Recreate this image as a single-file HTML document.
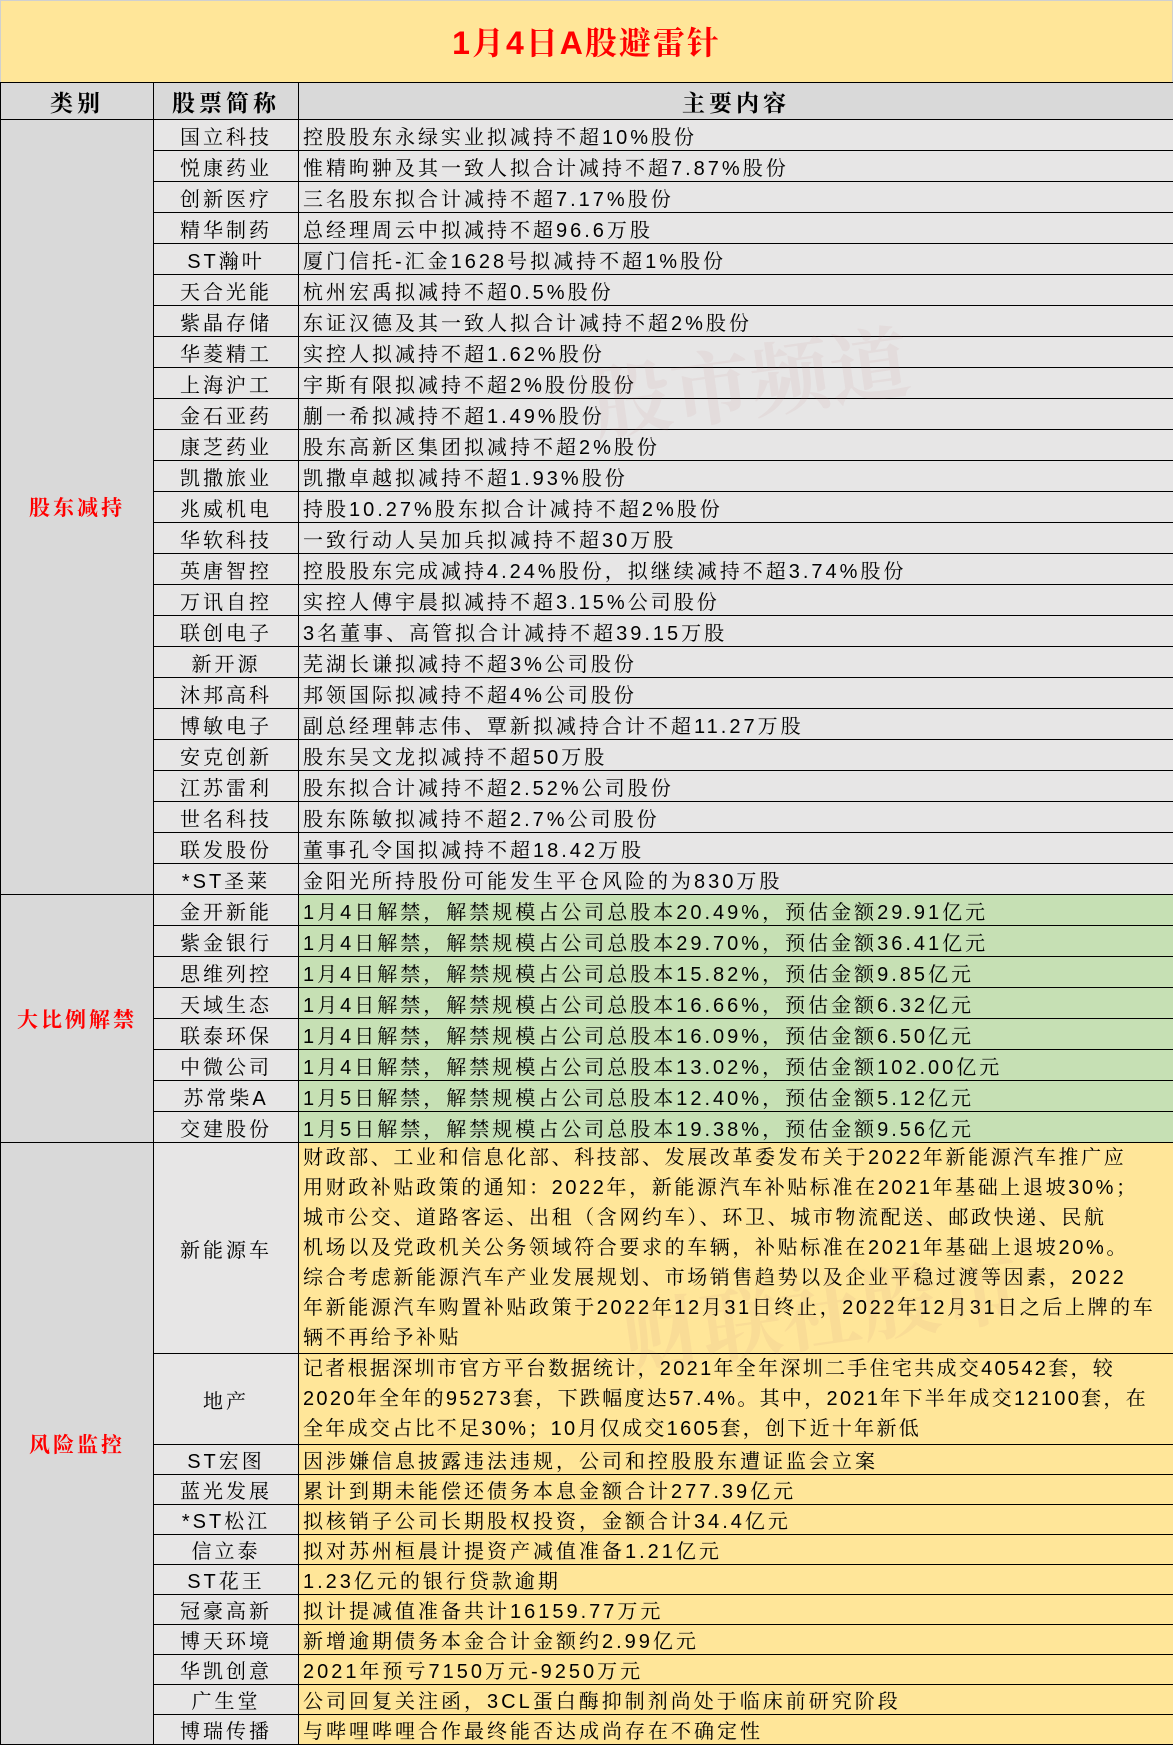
<!DOCTYPE html>
<html><head><meta charset="utf-8"><style>
body{margin:0;background:#fff;width:1173px;height:1743px;overflow:hidden;position:relative;font-family:"Liberation Sans","Noto Serif CJK SC",serif;}
.title{position:absolute;left:0;top:0;width:1171px;height:82px;background:#ffe699;border:1px solid #d0d0d0;border-bottom:none;text-align:center;line-height:84px;color:#ff0000;font-size:32px;font-weight:bold;letter-spacing:2px;}
table{position:absolute;left:0;top:82px;border-collapse:collapse;table-layout:fixed;width:1173px;}
td{border:1.5px solid #000;padding:0;font-size:20px;letter-spacing:3px;white-space:nowrap;overflow:hidden;color:#000;}
tr.h{height:37px;}
tr.r{height:31px;}
tr.s{height:30px;}
tr.b1{height:210px;}
tr.b2{height:90px;}
th{border:1.5px solid #000;background:#d9d9d9;font-size:23px;font-weight:bold;letter-spacing:4px;padding:0;}
.cat{background:#d9d9d9;text-align:center;color:#ff0000;font-weight:bold;font-size:21px;letter-spacing:3px;}
.n{background:#e7e6e6;text-align:center;}
.c{background:#e7e6e6;padding-left:4px;}
.g{background:#c6e0b4;padding-left:4px;}
.y{background:#ffe699;padding-left:4px;}
.m{line-height:30px;letter-spacing:2.6px;}
.wm{position:absolute;font-weight:bold;color:rgba(190,120,120,0.09);pointer-events:none;white-space:nowrap;}
</style></head><body>
<div class="title">1月4日A股避雷针</div>
<table>
<colgroup><col style="width:153px"><col style="width:145px"><col style="width:875px"></colgroup>
<tr class="h"><th>类别</th><th>股票简称</th><th>主要内容</th></tr>
<tr class="r"><td class="cat" rowspan="25">股东减持</td><td class="n">国立科技</td><td class="c">控股股东永绿实业拟减持不超10%股份</td></tr>
<tr class="r"><td class="n">悦康药业</td><td class="c">惟精昫翀及其一致人拟合计减持不超7.87%股份</td></tr>
<tr class="r"><td class="n">创新医疗</td><td class="c">三名股东拟合计减持不超7.17%股份</td></tr>
<tr class="r"><td class="n">精华制药</td><td class="c">总经理周云中拟减持不超96.6万股</td></tr>
<tr class="r"><td class="n">ST瀚叶</td><td class="c">厦门信托-汇金1628号拟减持不超1%股份</td></tr>
<tr class="r"><td class="n">天合光能</td><td class="c">杭州宏禹拟减持不超0.5%股份</td></tr>
<tr class="r"><td class="n">紫晶存储</td><td class="c">东证汉德及其一致人拟合计减持不超2%股份</td></tr>
<tr class="r"><td class="n">华菱精工</td><td class="c">实控人拟减持不超1.62%股份</td></tr>
<tr class="r"><td class="n">上海沪工</td><td class="c">宇斯有限拟减持不超2%股份股份</td></tr>
<tr class="r"><td class="n">金石亚药</td><td class="c">蒯一希拟减持不超1.49%股份</td></tr>
<tr class="r"><td class="n">康芝药业</td><td class="c">股东高新区集团拟减持不超2%股份</td></tr>
<tr class="r"><td class="n">凯撒旅业</td><td class="c">凯撒卓越拟减持不超1.93%股份</td></tr>
<tr class="r"><td class="n">兆威机电</td><td class="c">持股10.27%股东拟合计减持不超2%股份</td></tr>
<tr class="r"><td class="n">华软科技</td><td class="c">一致行动人吴加兵拟减持不超30万股</td></tr>
<tr class="r"><td class="n">英唐智控</td><td class="c">控股股东完成减持4.24%股份，拟继续减持不超3.74%股份</td></tr>
<tr class="r"><td class="n">万讯自控</td><td class="c">实控人傅宇晨拟减持不超3.15%公司股份</td></tr>
<tr class="r"><td class="n">联创电子</td><td class="c">3名董事、高管拟合计减持不超39.15万股</td></tr>
<tr class="r"><td class="n">新开源</td><td class="c">芜湖长谦拟减持不超3%公司股份</td></tr>
<tr class="r"><td class="n">沐邦高科</td><td class="c">邦领国际拟减持不超4%公司股份</td></tr>
<tr class="r"><td class="n">博敏电子</td><td class="c">副总经理韩志伟、覃新拟减持合计不超11.27万股</td></tr>
<tr class="r"><td class="n">安克创新</td><td class="c">股东吴文龙拟减持不超50万股</td></tr>
<tr class="r"><td class="n">江苏雷利</td><td class="c">股东拟合计减持不超2.52%公司股份</td></tr>
<tr class="r"><td class="n">世名科技</td><td class="c">股东陈敏拟减持不超2.7%公司股份</td></tr>
<tr class="r"><td class="n">联发股份</td><td class="c">董事孔令国拟减持不超18.42万股</td></tr>
<tr class="r"><td class="n">*ST圣莱</td><td class="c">金阳光所持股份可能发生平仓风险的为830万股</td></tr>
<tr class="r"><td class="cat" rowspan="8">大比例解禁</td><td class="n">金开新能</td><td class="g">1月4日解禁，解禁规模占公司总股本20.49%，预估金额29.91亿元</td></tr>
<tr class="r"><td class="n">紫金银行</td><td class="g">1月4日解禁，解禁规模占公司总股本29.70%，预估金额36.41亿元</td></tr>
<tr class="r"><td class="n">思维列控</td><td class="g">1月4日解禁，解禁规模占公司总股本15.82%，预估金额9.85亿元</td></tr>
<tr class="r"><td class="n">天域生态</td><td class="g">1月4日解禁，解禁规模占公司总股本16.66%，预估金额6.32亿元</td></tr>
<tr class="r"><td class="n">联泰环保</td><td class="g">1月4日解禁，解禁规模占公司总股本16.09%，预估金额6.50亿元</td></tr>
<tr class="r"><td class="n">中微公司</td><td class="g">1月4日解禁，解禁规模占公司总股本13.02%，预估金额102.00亿元</td></tr>
<tr class="r"><td class="n">苏常柴A</td><td class="g">1月5日解禁，解禁规模占公司总股本12.40%，预估金额5.12亿元</td></tr>
<tr class="r"><td class="n">交建股份</td><td class="g">1月5日解禁，解禁规模占公司总股本19.38%，预估金额9.56亿元</td></tr>
<tr class="b1"><td class="cat" rowspan="12">风险监控</td><td class="n">新能源车</td><td class="y m">财政部、工业和信息化部、科技部、发展改革委发布关于2022年新能源汽车推广应<br>用财政补贴政策的通知：2022年，新能源汽车补贴标准在2021年基础上退坡30%；<br>城市公交、道路客运、出租（含网约车）、环卫、城市物流配送、邮政快递、民航<br>机场以及党政机关公务领域符合要求的车辆，补贴标准在2021年基础上退坡20%。<br>综合考虑新能源汽车产业发展规划、市场销售趋势以及企业平稳过渡等因素，2022<br>年新能源汽车购置补贴政策于2022年12月31日终止，2022年12月31日之后上牌的车<br>辆不再给予补贴</td></tr>
<tr class="b2"><td class="n">地产</td><td class="y m" style="letter-spacing:2.3px">记者根据深圳市官方平台数据统计，2021年全年深圳二手住宅共成交40542套，较<br>2020年全年的95273套，下跌幅度达57.4%。其中，2021年下半年成交12100套，在<br>全年成交占比不足30%；10月仅成交1605套，创下近十年新低</td></tr>
<tr class="s"><td class="n">ST宏图</td><td class="y">因涉嫌信息披露违法违规，公司和控股股东遭证监会立案</td></tr>
<tr class="s"><td class="n">蓝光发展</td><td class="y">累计到期未能偿还债务本息金额合计277.39亿元</td></tr>
<tr class="s"><td class="n">*ST松江</td><td class="y">拟核销子公司长期股权投资，金额合计34.4亿元</td></tr>
<tr class="s"><td class="n">信立泰</td><td class="y">拟对苏州桓晨计提资产减值准备1.21亿元</td></tr>
<tr class="s"><td class="n">ST花王</td><td class="y">1.23亿元的银行贷款逾期</td></tr>
<tr class="s"><td class="n">冠豪高新</td><td class="y">拟计提减值准备共计16159.77万元</td></tr>
<tr class="s"><td class="n">博天环境</td><td class="y">新增逾期债务本金合计金额约2.99亿元</td></tr>
<tr class="s"><td class="n">华凯创意</td><td class="y">2021年预亏7150万元-9250万元</td></tr>
<tr class="s"><td class="n">广生堂</td><td class="y">公司回复关注函，3CL蛋白酶抑制剂尚处于临床前研究阶段</td></tr>
<tr class="s"><td class="n">博瑞传播</td><td class="y">与哔哩哔哩合作最终能否达成尚存在不确定性</td></tr>
</table>
<div class="wm" style="left:590px;top:320px;font-size:80px;transform:rotate(-8deg);">股市频道</div>
<div class="wm" style="left:620px;top:1250px;font-size:80px;transform:rotate(-8deg);">财联社股市</div>
</body></html>
